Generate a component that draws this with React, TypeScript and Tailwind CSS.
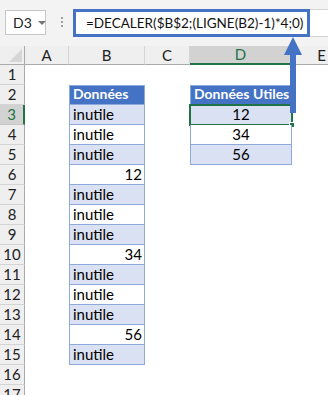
import React from "react";

const cols = ["A", "B", "C", "D", "E"];
const rows = Array.from({ length: 17 }, (_, i) => i + 1);

type Cell = { text: string; kind: "head" | "band" | "plain"; align?: "left" | "right" | "center" };

function colB(row: number): Cell | null {
  if (row === 2) return { text: "Données", kind: "head" };
  if (row < 3 || row > 15) return null;
  const band = row % 2 === 1 ? "band" : "plain";
  if (row === 6) return { text: "12", kind: "plain", align: "right" };
  if (row === 10) return { text: "34", kind: "plain", align: "right" };
  if (row === 14) return { text: "56", kind: "plain", align: "right" };
  return { text: "inutile", kind: band };
}

function colD(row: number): Cell | null {
  if (row === 2) return { text: "Données Utiles", kind: "head" };
  if (row === 3) return { text: "12", kind: "band", align: "center" };
  if (row === 4) return { text: "34", kind: "plain", align: "center" };
  if (row === 5) return { text: "56", kind: "band", align: "center" };
  return null;
}

function TableCell({ cell, first }: { cell: Cell; first: boolean }) {
  const bg =
    cell.kind === "head"
      ? "bg-[#4472c4] text-white font-bold text-[14px]"
      : cell.kind === "band"
      ? "bg-[#d9e1f2] text-black text-[15px]"
      : "bg-white text-black text-[15px]";
  const align =
    cell.align === "right" ? "justify-end pr-[2px]" : cell.align === "center" ? "justify-center" : "justify-start pl-[3px]";
  return (
    <div
      className={`flex h-full items-end whitespace-nowrap border-x border-b border-[#8ea9db] leading-[20px] ${first ? "border-t" : ""} ${bg} ${align}`}
    >
      {cell.text}
    </div>
  );
}

export default function App() {
  return (
    <div className="relative h-[395px] w-[328px] overflow-hidden bg-white" style={{ fontFamily: "Lato, 'Liberation Sans', sans-serif" }}>
      {/* formula bar */}
      <div className="flex h-[46px] items-start bg-[#f3f3f3] pt-[9px]">
        <div className="ml-[5px] mt-[1px] flex h-[25px] w-[41px] items-center border border-[#c6c6c6] bg-white pl-[7px] text-[14px] text-[#222]">
          D3
          <span className="ml-[6px] h-0 w-0 border-x-[4px] border-t-[4px] border-x-transparent border-t-[#777]" />
        </div>
        <div className="ml-[15px] mt-[8px] flex flex-col gap-[2px]">
          <span className="h-[2px] w-[2px] bg-[#a0a0a0]" />
          <span className="h-[2px] w-[2px] bg-[#a0a0a0]" />
          <span className="h-[2px] w-[2px] bg-[#a0a0a0]" />
        </div>
        <div className="ml-[10px] flex h-[28px] flex-1 border-y border-[#d4d4d4] bg-white">
          <div className="-my-px flex h-[28px] w-[237px] items-center border-[3px] border-[#4472c4] pl-[10px] text-[13.5px] text-[#111]">
            =DECALER($B$2;(LIGNE(B2)-1)*4;0)
          </div>
        </div>
      </div>

      {/* sheet */}
      <div className="grid grid-cols-[25px_44px_76px_45px_102px_60px] grid-rows-[19px_repeat(17,20px)]">
        <div className="relative border-b border-r border-[#ababab] bg-[#efefef]">
          <span className="absolute bottom-[2px] right-[2px] h-0 w-0 border-b-[13px] border-l-[13px] border-b-[#d6d6d6] border-l-transparent" />
        </div>
        {cols.map((c) => (
          <div
            key={c}
            className={`flex items-center justify-center border-r text-[15px] ${
              c === "D"
                ? "border-b-2 border-b-[#217346] border-r-[#c6c6c6] bg-[#d2d2d2] text-[#217346]"
                : "border-b border-b-[#ababab] border-r-[#d4d4d4] bg-[#efefef] text-[#222]"
            }`}
          >
            {c}
          </div>
        ))}
        {rows.map((r) => {
          const b = colB(r);
          const d = colD(r);
          return (
            <React.Fragment key={r}>
              <div
                className={`flex items-center justify-center border-b text-[15px] ${
                  r === 3
                    ? "border-r-2 border-b-[#c6c6c6] border-r-[#217346] bg-[#d2d2d2] text-[#217346]"
                    : "border-r border-b-[#d4d4d4] border-r-[#ababab] bg-[#efefef] text-[#222]"
                }`}
              >
                {r}
              </div>
              <div />
              <div>{b && <TableCell cell={b} first={r === 2} />}</div>
              <div />
              <div className="relative">
                {d && <TableCell cell={d} first={r === 2} />}
                {r === 3 && (
                  <>
                    <div className="absolute -inset-x-[1px] -top-[1px] bottom-[-1px] border-2 border-[#217346]" />
                    <div className="absolute bottom-[-3px] right-[-3px] h-[6px] w-[6px] border border-white bg-[#217346]" />
                  </>
                )}
              </div>
              <div />
            </React.Fragment>
          );
        })}
      </div>

      {/* arrow */}
      <svg className="absolute left-[284px] top-[37px]" width="20" height="78" viewBox="0 0 20 78">
        <polygon points="9,0 18,18 0,18" fill="#4472c4" />
        <rect x="6" y="17" width="6" height="59" fill="#4472c4" />
      </svg>
    </div>
  );
}
